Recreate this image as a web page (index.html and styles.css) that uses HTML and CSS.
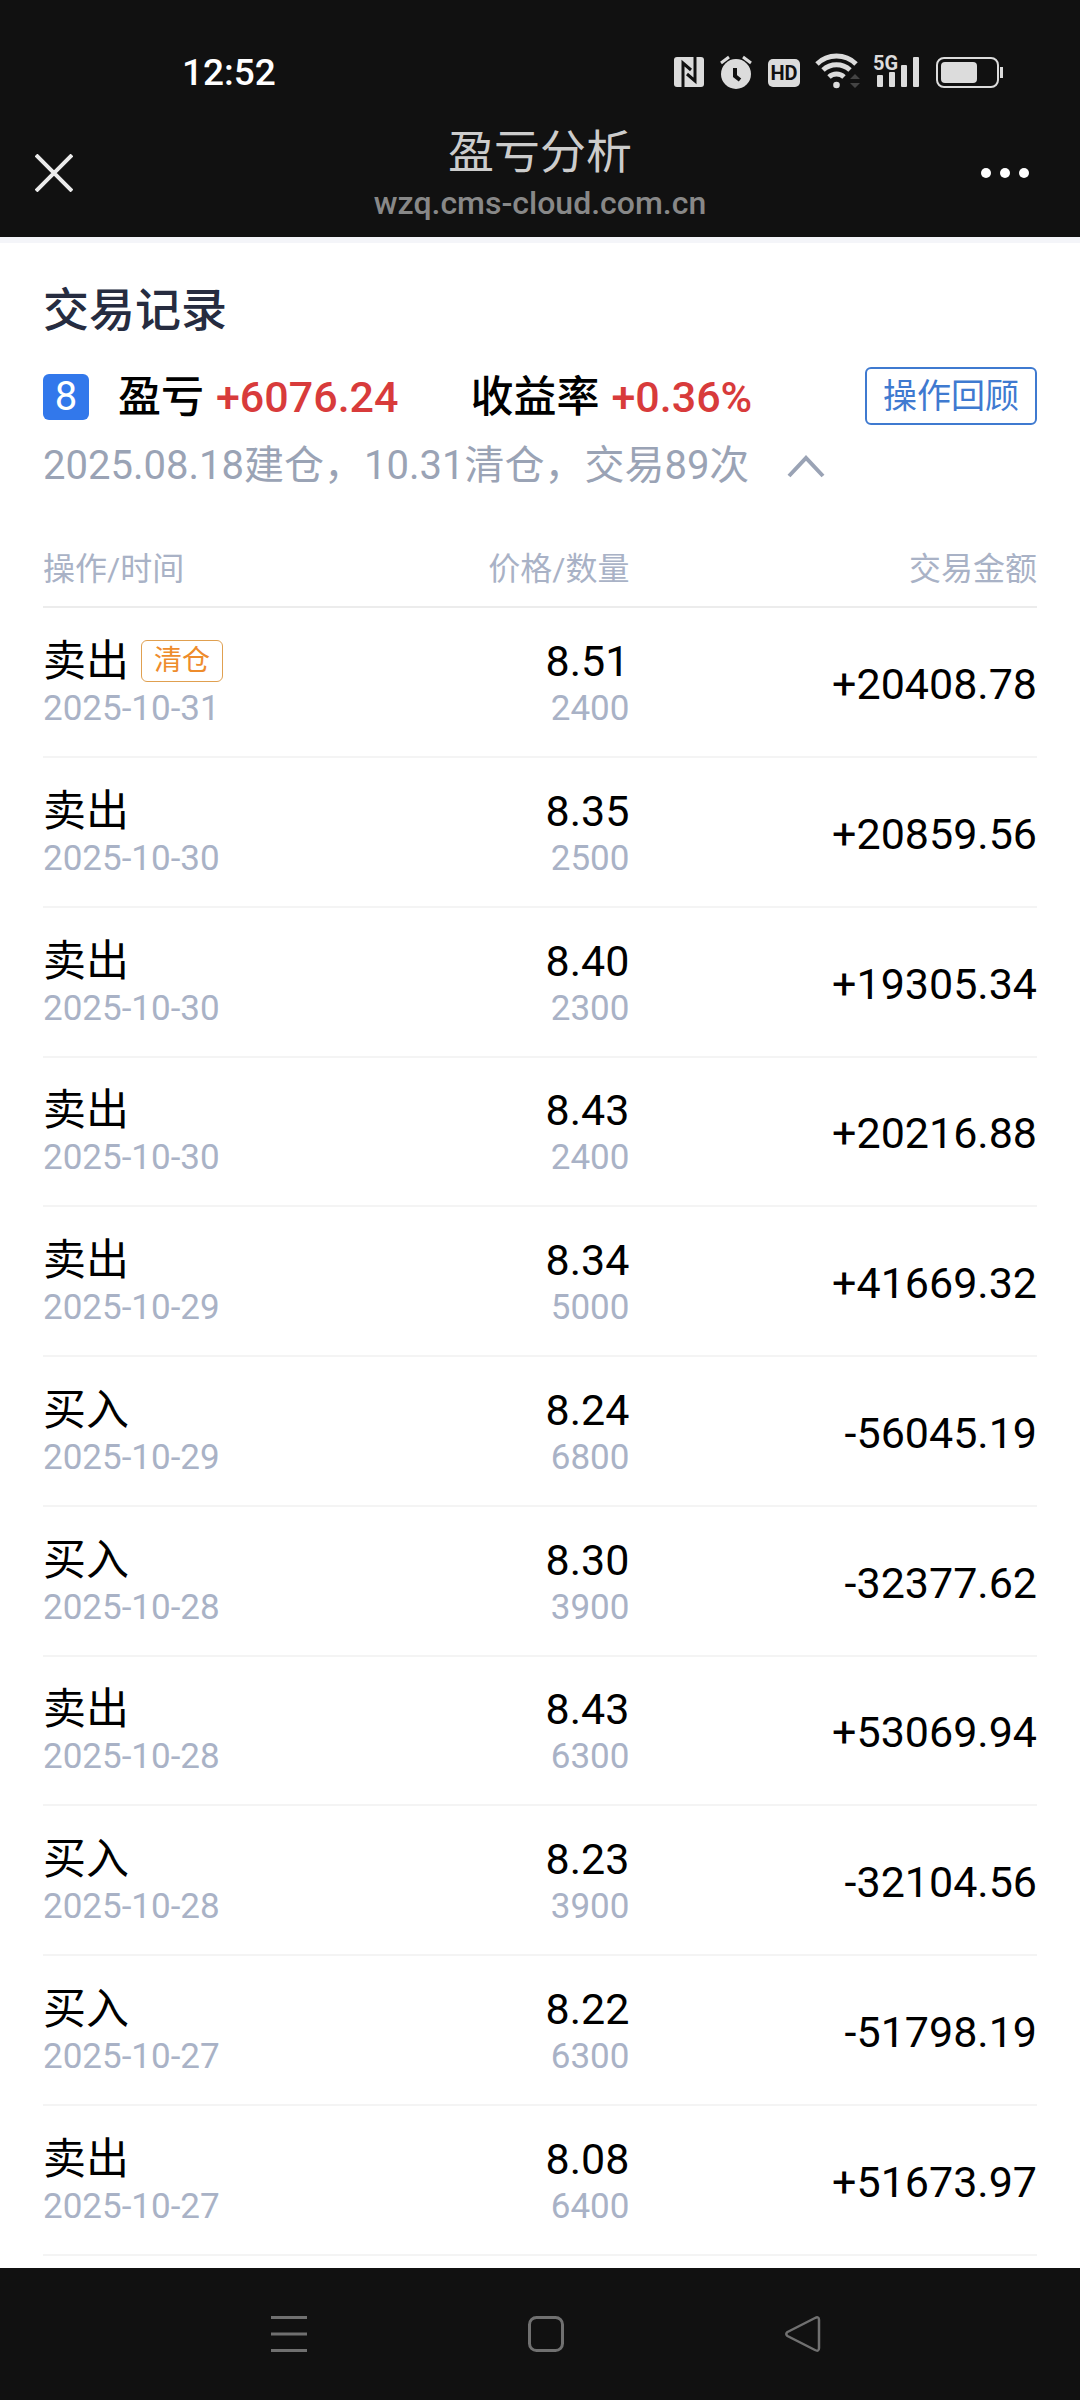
FILE: index.html
```html
<!DOCTYPE html>
<html lang="zh-CN">
<head>
<meta charset="utf-8">
<meta name="viewport" content="width=device-width, initial-scale=1">
<title>盈亏分析</title>
<link rel="stylesheet" href="styles.css">
</head>
<body>
<header class="top">
  <div class="status">
    <time class="clock">12:52</time>
    <div class="status-icons">
      <svg width="30" height="40" viewBox="0 0 30 40" aria-label="NFC"><rect y="5" width="30" height="30" rx="3" fill="#dcdcdc"/><path d="M9 35V11L17 18M21 5V29L13 22" fill="none" stroke="#111" stroke-width="3"/></svg>
      <svg width="32" height="40" viewBox="0 0 32 40" aria-label="闹钟"><circle cx="16" cy="22" r="15" fill="#dcdcdc"/><path d="M1 11l8-6M31 11l-8-6" stroke="#dcdcdc" stroke-width="3"/><path d="M15 16v8l5 4" fill="none" stroke="#111" stroke-width="4"/></svg>
      <svg width="32" height="40" viewBox="0 0 32 40" aria-label="HD"><rect y="7" width="32" height="28" rx="5" fill="#dcdcdc"/><text x="16" y="28" text-anchor="middle" class="hd">HD</text></svg>
      <svg class="wifi" width="41" height="40" viewBox="0 0 41 40" aria-label="WLAN"><g fill="none" stroke="#dcdcdc" stroke-width="5"><path d="M1 12A28 28 0 0 1 40 12"/><path d="M7 18A20 20 0 0 1 34 18"/><path d="M13 25A11 11 0 0 1 28 25"/></g><circle cx="20.500" cy="33" r="3.300" fill="#dcdcdc"/><path d="M34 27l5-5 5 5zM34 31l5 5 5-5z" fill="#444"/></svg>
      <svg width="47" height="40" viewBox="0 0 47 40" aria-label="5G"><text x="0" y="18" class="fiveg">5G</text><g fill="#dcdcdc"><rect x="4" y="23" width="6" height="12" rx="1"/><rect x="16" y="20" width="6" height="15" rx="1"/><rect x="28" y="13" width="6" height="22" rx="1"/><rect x="40" y="5" width="6" height="30" rx="1"/></g></svg>
      <svg width="67" height="40" viewBox="0 0 67 40" aria-label="电量"><rect x="1" y="6" width="61" height="29" rx="7" fill="none" stroke="#dcdcdc" stroke-width="2"/><rect x="5" y="10" width="36" height="21" rx="4" fill="#dcdcdc"/><path d="M65.500 15v11" stroke="#dcdcdc" stroke-width="3"/></svg>
    </div>
  </div>
  <div class="titlebar">
    <button class="icon-button" type="button" aria-label="关闭"><svg width="38" height="38" viewBox="0 0 38 38"><path d="M1 1l36 36M37 1L1 37" stroke="#ebebeb" stroke-width="4"/></svg></button>
    <div class="titles">
      <h1 class="title">盈亏分析</h1>
      <p class="host">wzq.cms-cloud.com.cn</p>
    </div>
    <button class="icon-button more" type="button" aria-label="更多"><svg width="48" height="10" viewBox="0 0 48 10" fill="#fff"><circle cx="5" cy="5" r="5"/><circle cx="24" cy="5" r="5"/><circle cx="43" cy="5" r="5"/></svg></button>
  </div>
</header>
<main class="content">
  <h2 class="heading">交易记录</h2>
  <div class="summary">
    <span class="badge">8</span>
    <p class="stat"><span>盈亏</span><strong class="gain">+6076.24</strong></p>
    <p class="stat"><span>收益率</span><strong class="gain">+0.36%</strong></p>
    <button class="review" type="button">操作回顾</button>
  </div>
  <div class="period">
    <p class="period-text">2025.08.18建仓，10.31清仓，交易89次</p>
    <button class="icon-button" type="button" aria-label="收起"><svg width="38" height="24" viewBox="0 0 38 24"><path d="M2 22L19 4l17 18" fill="none" stroke="#9aa3b5" stroke-width="4"/></svg></button>
  </div>
  <table class="trades">
    <thead><tr><th class="col-action">操作/时间</th><th class="col-price">价格/数量</th><th class="col-amount">交易金额</th></tr></thead>
    <tbody>
      <tr><td><div class="main tagged">卖出<span class="tag">清仓</span></div><div class="sub">2025-10-31</div></td><td><div class="main">8.51</div><div class="sub">2400</div></td><td class="main">+20408.78</td></tr>
      <tr><td><div class="main">卖出</div><div class="sub">2025-10-30</div></td><td><div class="main">8.35</div><div class="sub">2500</div></td><td class="main">+20859.56</td></tr>
      <tr><td><div class="main">卖出</div><div class="sub">2025-10-30</div></td><td><div class="main">8.40</div><div class="sub">2300</div></td><td class="main">+19305.34</td></tr>
      <tr><td><div class="main">卖出</div><div class="sub">2025-10-30</div></td><td><div class="main">8.43</div><div class="sub">2400</div></td><td class="main">+20216.88</td></tr>
      <tr><td><div class="main">卖出</div><div class="sub">2025-10-29</div></td><td><div class="main">8.34</div><div class="sub">5000</div></td><td class="main">+41669.32</td></tr>
      <tr><td><div class="main">买入</div><div class="sub">2025-10-29</div></td><td><div class="main">8.24</div><div class="sub">6800</div></td><td class="main">-56045.19</td></tr>
      <tr><td><div class="main">买入</div><div class="sub">2025-10-28</div></td><td><div class="main">8.30</div><div class="sub">3900</div></td><td class="main">-32377.62</td></tr>
      <tr><td><div class="main">卖出</div><div class="sub">2025-10-28</div></td><td><div class="main">8.43</div><div class="sub">6300</div></td><td class="main">+53069.94</td></tr>
      <tr><td><div class="main">买入</div><div class="sub">2025-10-28</div></td><td><div class="main">8.23</div><div class="sub">3900</div></td><td class="main">-32104.56</td></tr>
      <tr><td><div class="main">买入</div><div class="sub">2025-10-27</div></td><td><div class="main">8.22</div><div class="sub">6300</div></td><td class="main">-51798.19</td></tr>
      <tr><td><div class="main">卖出</div><div class="sub">2025-10-27</div></td><td><div class="main">8.08</div><div class="sub">6400</div></td><td class="main">+51673.97</td></tr>
    </tbody>
  </table>
</main>
<nav class="navbar" aria-label="系统导航">
  <button class="icon-button" type="button" aria-label="最近任务"><svg width="36" height="36" viewBox="0 0 36 36"><path d="M0 1.500h36M0 18h36M0 34.500h36" stroke="#707070" stroke-width="3"/></svg></button>
  <button class="icon-button" type="button" aria-label="主屏幕"><svg width="36" height="36" viewBox="0 0 36 36"><rect x="1.500" y="1.500" width="33" height="33" rx="7" fill="none" stroke="#707070" stroke-width="3"/></svg></button>
  <button class="icon-button" type="button" aria-label="返回"><svg width="36" height="36" viewBox="0 0 36 36"><path d="M2.500 16L30 2Q34 0 34 4V32Q34 36 30 34L2.500 20Q0 18 2.500 16Z" fill="none" stroke="#707070" stroke-width="2.500"/></svg></button>
</nav>
</body>
</html>
```
FILE: styles.css
```css
* { box-sizing: border-box; }

body {
  margin: 0;
  min-height: 100vh;
  display: flex;
  flex-direction: column;
  background: #fff;
  color: #000;
  font-family: Roboto, "Noto Sans CJK SC", sans-serif;
}

h1, h2, p { margin: 0; font-weight: 400; }

svg { display: block; }

.icon-button {
  padding: 0;
  border: 0;
  background: none;
}

/* Status and title bars */
.top {
  background: #111;
  border-bottom: 6px solid #f4f5f9;
}

.status {
  display: flex;
  align-items: center;
  justify-content: space-between;
  padding: 48px 77px 0 182px;
}

.clock {
  padding-top: 2px;
  color: #fff;
  font-size: 37px;
  font-weight: 500;
  line-height: 46px;
}

.status-icons {
  display: flex;
  gap: 16px;
}

.wifi { overflow: visible; }

.hd { font-size: 20px; font-weight: 700; fill: #111; }

.fiveg { font-size: 20px; font-weight: 700; fill: #dcdcdc; }

.titlebar {
  display: grid;
  grid-template-columns: 1fr auto 1fr;
  align-items: center;
  padding: 24px 51px 11px 35px;
}

.more { justify-self: end; }

.titles { padding: 4px 0 0 16px; text-align: center; }

.title {
  color: #ccc;
  font-size: 46px;
  line-height: 56px;
}

.host {
  color: #888;
  font-size: 32px;
  font-weight: 500;
  line-height: 46px;
}

/* Position summary */
.content {
  flex: 1;
  padding: 38px 43px 12px;
}

.heading {
  color: #262c40;
  font-size: 46px;
  font-weight: 500;
  line-height: 58px;
}

.summary {
  display: flex;
  align-items: center;
  margin-top: 28px;
}

.badge {
  width: 46px;
  margin: 2px 29px 0 0;
  border-radius: 6px;
  background: #3278eb;
  color: #fff;
  font-size: 40px;
  line-height: 46px;
  text-align: center;
}

.stat {
  display: flex;
  gap: 12px;
  margin-right: 72px;
  padding-top: 2px;
  font-size: 43px;
  font-weight: 500;
  line-height: 56px;
}

.gain { color: #d83b3b; font-weight: 500; }

.review {
  margin-left: auto;
  height: 58px;
  padding: 0 16px;
  border: 2px solid #3f7ad0;
  border-radius: 6px;
  background: #fff;
  color: #3f7ad0;
  font: inherit;
  font-size: 34px;
  line-height: 48px;
}

.period {
  display: flex;
  align-items: center;
  gap: 38px;
  margin-top: 12px;
  color: #9aa3b5;
}

.period-text { font-size: 40px; line-height: 58px; }

/* Trade list */
.trades {
  width: 100%;
  margin-top: 38px;
  border-collapse: collapse;
  table-layout: fixed;
}

.trades th {
  height: 74px;
  padding: 0 0 2px;
  border-bottom: 2px solid #ececec;
  color: #a9b2c6;
  font-size: 32px;
  font-weight: 400;
  line-height: 40px;
  text-align: right;
}

.trades td {
  height: 150px;
  padding: 3px 0 0;
  border-bottom: 2px solid #f4f4f4;
  text-align: right;
}

.trades tr:nth-child(4n) td { height: 149px; }

.trades .col-action { width: 30%; }
.trades .col-price { width: 29%; }
.trades .col-amount { width: 41%; }

.trades th:first-child,
.trades td:first-child { text-align: left; }

.main { font-size: 43px; line-height: 50px; }

.sub { color: #a9b2c6; font-size: 35px; line-height: 46px; }

.tagged {
  display: flex;
  align-items: center;
  gap: 12px;
}

.tag {
  padding: 0 12px;
  border: 1px solid #e0a050;
  border-radius: 6px;
  color: #ee8c2c;
  font-size: 28px;
  line-height: 40px;
}

/* System navigation */
.navbar {
  display: grid;
  grid-template-columns: repeat(3, 1fr);
  place-items: center;
  height: 132px;
  padding: 0 148px 0 160px;
  background: #111;
}
```
